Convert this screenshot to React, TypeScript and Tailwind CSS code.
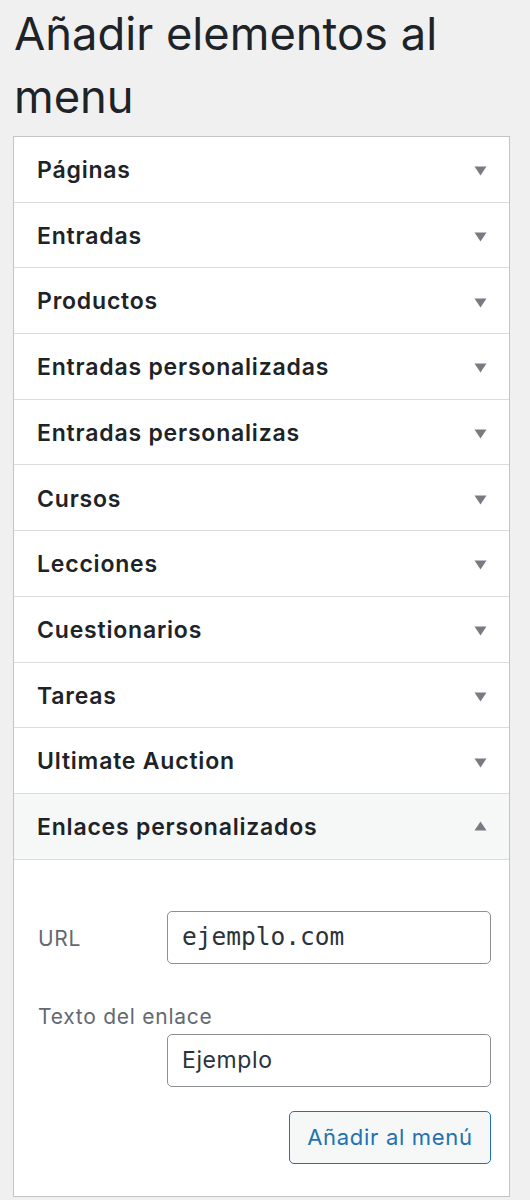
import React from 'react';

const sections = [
  'Páginas',
  'Entradas',
  'Productos',
  'Entradas personalizadas',
  'Entradas personalizas',
  'Cursos',
  'Lecciones',
  'Cuestionarios',
  'Tareas',
  'Ultimate Auction',
];

function Arrow({ up = false }: { up?: boolean }) {
  return (
    <svg width="13" height="10" viewBox="0 0 13 10" className={up ? 'rotate-180' : 'translate-y-[2px]'}>
      <path d="M0.5 0.5 H12.5 L6.5 9.5 Z" fill="#787c82" />
    </svg>
  );
}

function SectionRow({ title, open = false }: { title: string; open?: boolean }) {
  return (
    <div
      className={`flex h-[65.7px] items-center justify-between border-b border-[#dcdcde] pl-[23px] pr-[22px] ${
        open ? 'bg-[#f6f7f7]' : 'bg-white'
      }`}
    >
      <span className="pt-[2px] text-[23px] font-semibold tracking-[0.8px] text-[#1d2327]">{title}</span>
      <Arrow up={open} />
    </div>
  );
}

export default function App() {
  return (
    <div
      className="min-h-[1200px] bg-[#f0f0f1] px-[13px]"
      style={{ fontFamily: 'Inter, "Liberation Sans", sans-serif' }}
    >
      <h1 className="pl-px pt-[2px] pb-[8px] text-[45.3px] font-normal leading-[63px] text-[#1d2327]">
        Añadir elementos al menu
      </h1>
      <div className="w-[497px] border border-b-0 border-[#c3c4c7] bg-white">
        {sections.map((s) => (
          <SectionRow key={s} title={s} />
        ))}
        <SectionRow title="Enlaces personalizados" open />
        <div className="border-b border-[#c3c4c7] pb-[32px] pl-[24px] pr-[18px] pt-[51px]">
          <div className="flex items-center">
            <label className="w-[129px] pt-[3px] text-[21px] tracking-[0.7px] text-[#646970]">URL</label>
            <div className="flex h-[53px] flex-1 items-center rounded-[5px] border border-[#8c8f94] px-[14px]">
              <span className="text-[24.5px] text-[#2c3338]" style={{ fontFamily: '"DejaVu Sans Mono", "Liberation Mono", monospace' }}>
                ejemplo.com
              </span>
            </div>
          </div>
          <div className="mt-[39px] text-[21px] leading-[28px] tracking-[0.75px] text-[#646970]">Texto del enlace</div>
          <div className="mt-[3px] flex">
            <div className="ml-[129px] flex h-[53px] flex-1 items-center rounded-[5px] border border-[#8c8f94] px-[14px]">
              <span className="text-[23px] tracking-[0.6px] text-[#2c3338]">Ejemplo</span>
            </div>
          </div>
          <div className="mt-[24px] flex justify-end">
            <button className="h-[53px] w-[202px] rounded-[5px] border-[1.5px] border-[#2271b1] bg-[#f6f7f7] text-[22px] tracking-[0.7px] text-[#2271b1]">
              Añadir al menú
            </button>
          </div>
        </div>
      </div>
    </div>
  );
}
